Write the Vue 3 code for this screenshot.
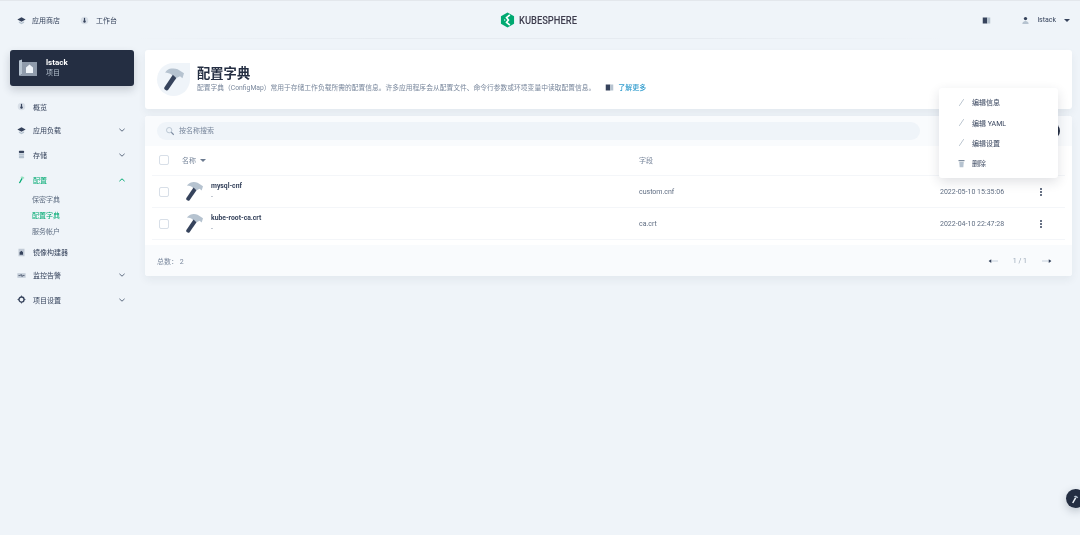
<script setup>
const rows = [
  { name: 'mysql-cnf', field: 'custom.cnf', time: '2022-05-10 15:35:06' },
  { name: 'kube-root-ca.crt', field: 'ca.crt', time: '2022-04-10 22:47:28' },
]
const menu = ['编辑信息', '编辑 YAML', '编辑设置']
</script>

<template>
  <div class="page">
    <svg class="defs" width="0" height="0">
      <symbol id="hammer" viewBox="0 0 17 19">
        <path d="M.9 3.6C2.5 1.4 4.4.4 6.3.2C8.2 0 10 .1 11.6.8L17 4.2L15.7 8.4L13.6 6.8L10.7 8.2L6.5 5.4C5 4.4 3 3.7.9 3.6Z" fill="#b6c3d0" />
        <path d="M7.5 5.5L10.5 8.2L3.6 18.2C3.1 18.9 2.3 19 1.7 18.6L.7 17.9C.1 17.4 0 16.7.4 16.1Z" fill="#36435c" />
      </symbol>
      <symbol id="layers" viewBox="0 0 12 12">
        <path d="M6 1.5L11.5 4.5L6 7.5L.5 4.5Z" fill="#36435c" />
        <path d="M2.5 7L6 9L9.5 7V9L6 11L2.5 9Z" fill="#b6c3d0" />
      </symbol>
      <symbol id="dash" viewBox="0 0 12 12">
        <circle cx="6" cy="6" r="5" fill="#d8dfe8" />
        <path d="M6 2.5V6.5" stroke="#36435c" stroke-width="1.6" />
        <circle cx="6" cy="7.4" r="1.6" fill="#36435c" />
      </symbol>
      <symbol id="chev" viewBox="0 0 10 10">
        <path d="M2.4 3.8L5 6.2L7.6 3.8" fill="none" stroke="currentColor" stroke-width="1" />
      </symbol>
      <symbol id="book" viewBox="0 0 12 12">
        <rect x="1" y="2" width="6" height="8" fill="#36435c" />
        <rect x="7" y="2" width="4" height="8" fill="#b6c3d0" />
      </symbol>
    </svg>

    <header class="top">
      <div class="top-left">
        <a class="top-link"><svg class="ico"><use href="#layers" /></svg>应用商店</a>
        <a class="top-link"><svg class="ico"><use href="#dash" /></svg>工作台</a>
      </div>
      <div class="logo">
        <svg class="logo-mark" viewBox="0 0 16 17">
          <path d="M8 .5L15 4.5V12.5L8 16.5L1 12.5V4.5Z" fill="#00a971" />
          <path d="M10.5 3L7 6L9 8.5L7 11L10.5 14" fill="none" stroke="#fff" stroke-width="1.8" />
          <path d="M4.5 7.5L6 8.5L4.5 9.5Z" fill="#fff" />
        </svg>
        <span class="logo-text">KUBESPHERE</span>
      </div>
      <div class="top-right">
        <svg class="ico book"><use href="#book" /></svg>
        <span class="user">
          <svg class="ico" viewBox="0 0 12 12">
            <circle cx="6" cy="3.4" r="2.2" fill="#36435c" />
            <path d="M1.8 10.5C2 7.6 4 6.6 6 6.6S10 7.6 10.2 10.5Z" fill="#b6c3d0" />
          </svg>
          lstack
          <i class="caret dark"></i>
        </span>
      </div>
      <div class="top-line"></div>
    </header>

    <div class="body">
      <aside class="side">
        <div class="ws">
          <svg class="ws-ico" viewBox="0 0 18 18">
            <path d="M0 1.5L3 .5V15.5L0 16.5Z" fill="#b6c3d0" />
            <path d="M3 3H18V17H0V16.5L3 15.5Z" fill="#8f9bab" />
            <path d="M7 14V8.5L10.5 5.5L14 8.5V14Z" fill="#eff4f9" />
          </svg>
          <div>
            <div class="ws-name">lstack</div>
            <div class="ws-sub">项目</div>
          </div>
        </div>
        <nav class="nav">
          <div class="item short"><svg class="ico"><use href="#dash" /></svg>概览</div>
          <div class="item"><svg class="ico"><use href="#layers" /></svg>应用负载<svg class="chev"><use href="#chev" /></svg></div>
          <div class="item tall">
            <svg class="ico" viewBox="0 0 12 12">
              <rect x="2.5" y="1" width="7" height="3" rx="1" fill="#36435c" />
              <rect x="2.5" y="4.5" width="7" height="3" fill="#b6c3d0" />
              <rect x="2.5" y="8" width="7" height="3" rx="1" fill="#b6c3d0" />
            </svg>存储<svg class="chev"><use href="#chev" /></svg>
          </div>
          <div class="item tall active">
            <svg class="ico" viewBox="0 0 24 24">
              <path d="M9 6C12 3 16 4 20 8L17 10C15 9 13 8 9 6Z" fill="#8fe0bb" />
              <path d="M12 8L15 10L8 22L5 21Z" fill="#00aa72" />
            </svg>配置<svg class="chev up"><use href="#chev" /></svg>
          </div>
          <div class="subs">
            <div class="sub">保密字典</div>
            <div class="sub on">配置字典</div>
            <div class="sub">服务帐户</div>
          </div>
          <div class="item">
            <svg class="ico" viewBox="0 0 12 12">
              <rect x="2" y="1" width="8" height="10" fill="#c1cad6" />
              <path d="M3.5 9V5.5L6 3.5L8 5.5V9Z" fill="#36435c" />
            </svg>镜像构建器
          </div>
          <div class="item alarm">
            <svg class="ico" viewBox="0 0 12 12">
              <rect x=".5" y="3" width="11" height="6" fill="#c1cad6" />
              <path d="M2 6H4.5L5.5 4.5L6.8 7.5L7.6 6H10" fill="none" stroke="#36435c" stroke-width=".9" />
            </svg>监控告警<svg class="chev"><use href="#chev" /></svg>
          </div>
          <div class="item tall setting">
            <svg class="ico" viewBox="0 0 12 12">
              <circle cx="6" cy="6" r="3.4" fill="none" stroke="#36435c" stroke-width="1.8" />
              <path d="M6 .8V2.4M6 9.6V11.2M.8 6H2.4M9.6 6H11.2" stroke="#36435c" stroke-width="1.3" />
            </svg>项目设置<svg class="chev"><use href="#chev" /></svg>
          </div>
        </nav>
      </aside>

      <main class="main">
        <section class="banner">
          <div class="badge"><svg class="badge-ico"><use href="#hammer" /></svg></div>
          <div class="banner-text">
            <h1 class="title">配置字典</h1>
            <p class="desc">
              <span>配置字典（ConfigMap）常用于存储工作负载所需的配置信息。许多应用程序会从配置文件、命令行参数或环境变量中读取配置信息。</span>
              <svg class="ico book-s"><use href="#book" /></svg>
              <a class="more">了解更多</a>
            </p>
          </div>
        </section>

        <section class="card">
          <div class="toolbar">
            <div class="search">
              <svg class="search-ico" viewBox="0 0 12 12">
                <circle cx="5" cy="5" r="3.2" fill="none" stroke="#b6c3d0" stroke-width="1.1" />
                <path d="M7.5 7.5L10.5 10.5" stroke="#7c8ba0" stroke-width="1.3" />
              </svg>
              <span class="search-text">按名称搜索</span>
            </div>
            <div class="round"></div>
          </div>
          <div class="table">
            <div class="row head">
              <span class="box"></span>
              <span class="c-name">名称<i class="caret"></i></span>
              <span class="c-field">字段</span>
            </div>
            <div v-for="r in rows" :key="r.name" class="row">
              <span class="box"></span>
              <span class="c-name name-cell">
                <svg class="row-ico"><use href="#hammer" /></svg>
                <span class="r-text">
                  <b class="r-name">{{ r.name }}</b>
                  <small class="r-sub">-</small>
                </span>
              </span>
              <span class="c-field val">{{ r.field }}</span>
              <span class="c-time val">{{ r.time }}</span>
              <span class="dots"><i></i><i></i><i></i></span>
            </div>
          </div>
          <div class="foot">
            <span>总数： 2</span>
            <span class="pager">
              <svg class="arrow" viewBox="0 0 14 8"><path d="M1 4H13" stroke="#b6c3d0" /><path d="M.5 4L4 1.5V6.5Z" fill="#36435c" /></svg>
              <span class="pg">1 / 1</span>
              <svg class="arrow" viewBox="0 0 14 8"><path d="M1 4H13" stroke="#b6c3d0" /><path d="M13.5 4L10 1.5V6.5Z" fill="#36435c" /></svg>
            </span>
          </div>
        </section>
      </main>
    </div>

    <div class="menu">
      <div v-for="m in menu" :key="m" class="m-item">
        <svg class="ico" viewBox="0 0 12 12"><path d="M3 10.5L9 1.5" stroke="#9aa8b8" stroke-width=".9" /></svg>{{ m }}
      </div>
      <div class="m-item">
        <svg class="ico" viewBox="0 0 12 12">
          <rect x="2" y="1.5" width="8" height="1.4" fill="#6c7b90" />
          <path d="M3 3.5H9L8.5 11H3.5Z" fill="#b6c3d0" />
        </svg>删除
      </div>
    </div>

    <div class="fab">
      <svg class="fab-ico" viewBox="0 0 24 24">
        <path d="M9 6C12 3 16 4 20 8L17 10C15 9 13 8 9 6Z" fill="#b6c3d0" />
        <path d="M12 8L15 10L8 22L5 21Z" fill="#eff4f9" />
      </svg>
    </div>
  </div>
</template>

<style>
html, body { margin: 0; background: #eff4f9; }
</style>

<style scoped>
.page {
  position: relative;
  width: 1080px;
  height: 535px;
  overflow: hidden;
  background: #eff4f9;
  border-top: 1px solid #e3e7ec;
  box-sizing: border-box;
  font-family: Roboto, "Noto Sans CJK SC", sans-serif;
  font-size: 7px;
  color: #36435c;
  filter: blur(.3px);
}
.defs { position: absolute; }
.ico { width: 9px; height: 9px; flex: none; }

.top {
  position: relative;
  height: 38px;
  display: flex;
  align-items: center;
  justify-content: space-between;
  padding: 0 10px 0 17px;
}
.top-left { display: flex; gap: 17px; }
.top-link { display: flex; align-items: center; gap: 6px; width: 46px; font-size: 7px; }
.top-left .top-link:last-child { width: auto; gap: 7px; }
.logo {
  position: absolute;
  left: 500px;
  top: 11px;
  display: flex;
  align-items: center;
  gap: 4px;
}
.logo-mark { width: 15px; height: 16px; }
.logo-text {
  font-size: 11px;
  font-weight: 500;
  color: #3c3b4c;
  transform: scaleX(.85);
  transform-origin: left center;
}
.top-right { display: flex; align-items: center; gap: 30px; }
.user { display: flex; align-items: center; gap: 7px; }
.top-line {
  position: absolute;
  left: 130px;
  right: 130px;
  bottom: 0;
  height: 1px;
  background: linear-gradient(90deg, #eff4f9, #e6ebf1 30%, #e6ebf1 70%, #eff4f9);
}
.caret {
  display: inline-block;
  width: 0;
  height: 0;
  margin-left: 4px;
  border: 3px solid transparent;
  border-top: 3px solid #6c7b90;
  border-bottom: 0;
  vertical-align: middle;
}
.caret.dark { border-top-color: #36435c; margin-left: 1px; }

.body { display: flex; padding-top: 11px; }
.side { width: 124px; margin: 0 11px 0 10px; flex: none; }
.ws {
  height: 36px;
  display: flex;
  align-items: center;
  gap: 9px;
  padding-left: 9px;
  background: #242e42;
  border-radius: 3px;
  box-shadow: 0 4px 8px rgba(36, 46, 66, .2);
  color: #fff;
}
.ws-ico { width: 18px; height: 18px; }
.ws-name { font-size: 8px; font-weight: 700; line-height: 11px; }
.ws-sub { font-size: 7px; line-height: 11px; color: #b6c3d0; }

.nav { margin-top: 9px; }
.item {
  display: flex;
  align-items: center;
  gap: 7px;
  height: 24px;
  padding-left: 7px;
  color: #36435c;
}
.item.short { height: 23px; }
.item.tall { height: 25px; }
.item.alarm { height: 22px; }
.item.setting { margin-top: 1px; }
.item.active { color: #00aa72; }
.chev { width: 10px; height: 10px; margin-left: auto; margin-right: 7px; color: #5f6d82; }
.chev.up { transform: rotate(180deg); color: #00aa72; }
.sub { height: 16px; line-height: 16px; padding-left: 22px; color: #5f6d82; }
.sub.on { color: #00aa72; }

.main { width: 927px; flex: none; }
.banner {
  height: 59px;
  display: flex;
  align-items: center;
  gap: 7px;
  padding-left: 12px;
  box-sizing: border-box;
  background: #fff;
  border-radius: 3px;
  box-shadow: 0 4px 8px rgba(36, 46, 66, .06);
}
.badge {
  width: 33px;
  height: 33px;
  display: flex;
  align-items: center;
  justify-content: center;
  background: #eff4f9;
  border-radius: 50% 0 50% 50%;
}
.badge-ico { width: 20px; height: 23px; }
.banner-text { padding-bottom: 2px; }
.title { margin: 0; font-size: 13.3px; line-height: 17px; font-weight: 700; color: #242e42; }
.desc { margin: 1px 0 0; display: flex; align-items: center; line-height: 10px; color: #79879c; font-size: 6.77px; }
.book-s { margin-left: 10px; }
.more { margin-left: 4px; font-size: 7px; color: #329dce; font-weight: 500; }

.card {
  position: relative;
  margin-top: 7px;
  background: #fff;
  border-radius: 3px;
  box-shadow: 0 4px 8px rgba(36, 46, 66, .06);
}
.toolbar {
  height: 30px;
  display: flex;
  align-items: center;
  padding: 0 12px;
  background: #f9fbfd;
  border-radius: 3px 3px 0 0;
}
.search {
  width: 763px;
  height: 18px;
  display: flex;
  align-items: center;
  gap: 4px;
  padding-left: 8px;
  box-sizing: border-box;
  background: #eff4f9;
  border-radius: 9px;
  color: #79879c;
}
.search-ico { width: 10px; height: 10px; }
.search-text { margin-bottom: 2px; }
.round {
  position: absolute;
  right: 12px;
  top: 7px;
  width: 16px;
  height: 16px;
  border-radius: 50%;
  background: #242e42;
}
.table { padding: 0 7px; }
.row {
  display: flex;
  align-items: center;
  height: 32px;
  border-bottom: 1px solid #f4f6f9;
  box-sizing: border-box;
  padding-left: 7px;
}
.row.head { height: 30px; padding-bottom: 2px; color: #79879c; }
.box {
  width: 8px;
  height: 8px;
  flex: none;
  border: 1px solid #d8dfe8;
  border-radius: 2px;
  background: #fff;
}
.c-name { width: 457px; margin-left: 13px; flex: none; }
.c-field { width: 301px; flex: none; }
.c-time { width: 100px; flex: none; }
.val { color: #5f6d82; font-size: 7px; }
.name-cell { display: flex; align-items: center; gap: 8px; }
.row-ico { width: 17px; height: 19px; margin-left: 4px; flex: none; }
.r-text { padding-top: 1px; }
.r-name { display: block; font-size: 6.8px; line-height: 10px; font-weight: 700; color: #36435c; }
.r-sub { display: block; font-size: 7px; line-height: 13px; color: #79879c; }
.dots { display: flex; flex-direction: column; gap: 1px; }
.dots i { width: 2px; height: 2px; border-radius: 50%; background: #36435c; }
.foot {
  margin-top: 5px;
  height: 31px;
  display: flex;
  align-items: center;
  justify-content: space-between;
  padding: 0 20px 0 12px;
  background: #f9fbfd;
  border-radius: 0 0 3px 3px;
  color: #79879c;
}
.pager { display: flex; align-items: center; gap: 14px; }
.pg { color: #9aa8b8; }
.arrow { width: 11px; height: 6px; }

.menu {
  position: absolute;
  left: 939px;
  top: 87px;
  width: 119px;
  height: 90px;
  box-sizing: border-box;
  padding-top: 4px;
  background: #fff;
  border-radius: 3px;
  box-shadow: 0 4px 12px rgba(36, 46, 66, .14);
}
.m-item {
  height: 20.4px;
  display: flex;
  align-items: center;
  gap: 6px;
  padding-left: 18px;
  color: #36435c;
}
.fab {
  position: absolute;
  left: 1066px;
  top: 488px;
  width: 19px;
  height: 19px;
  display: flex;
  align-items: center;
  padding-left: 4px;
  box-sizing: border-box;
  border-radius: 50%;
  background: #242e42;
  box-shadow: 0 3px 8px rgba(36, 46, 66, .25);
}
.fab-ico { width: 10px; height: 10px; }
</style>
